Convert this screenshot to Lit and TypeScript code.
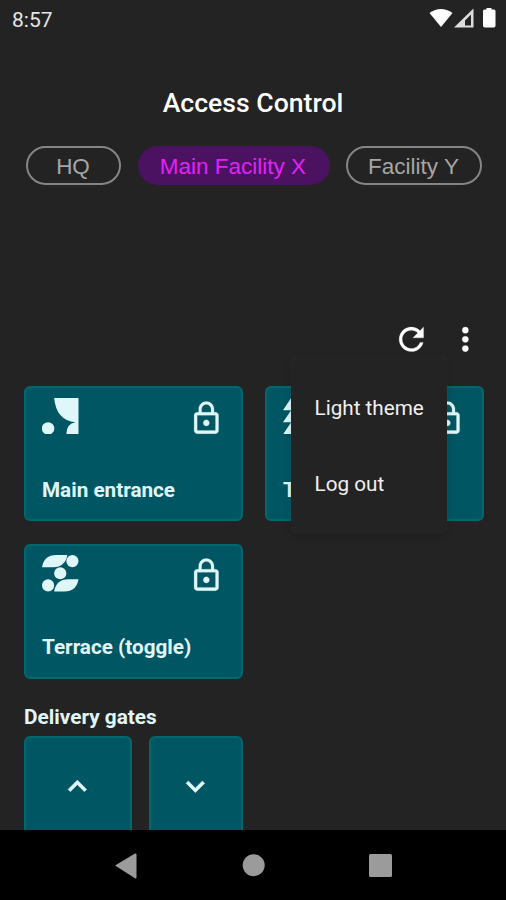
import { LitElement, html, css, svg, nothing } from "lit";
import { customElement, property, state } from "lit/decorators.js";
import { classMap } from "lit/directives/class-map.js";

const glyphs = {
  gate: svg`<path d="M12 0H36V36H24Q24 25.5 33 24Q14 22 12 0Z"/><circle cx="6" cy="30" r="6.2"/>`,
  trees: svg`<path d="M8 0L16 12H0ZM8 12L16 24H0ZM8 24L16 36H0ZM28 0L36 12H20ZM28 12L36 24H20ZM28 24L36 36H20Z"/>`,
  terrace: svg`<path d="M0 12Q2 0 14 0H25Q23 12 11 12ZM12 36Q14 24 26 24H36Q34 36 22 36Z"/><circle cx="30" cy="6" r="6"/><circle cx="18" cy="18" r="6"/><circle cx="6" cy="30" r="6"/>`,
};

const icons = {
  lock: svg`<path d="M18 8h-1V6c0-2.76-2.24-5-5-5S7 3.24 7 6v2H6c-1.1 0-2 .9-2 2v10c0 1.1.9 2 2 2h12c1.1 0 2-.9 2-2V10c0-1.1-.9-2-2-2zM8.9 6c0-1.71 1.39-3.1 3.1-3.1s3.1 1.39 3.1 3.1v2H8.9zM18 20H6V10h12zm-6-3c1.1 0 2-.9 2-2s-.9-2-2-2-2 .9-2 2 .9 2 2 2z"/>`,
  refresh: svg`<path d="M17.65 6.35C16.2 4.9 14.21 4 12 4c-4.42 0-7.99 3.58-7.99 8s3.57 8 7.99 8c3.73 0 6.84-2.55 7.73-6h-2.08c-.82 2.33-3.04 4-5.65 4-3.31 0-6-2.69-6-6s2.69-6 6-6c1.66 0 3.14.69 4.22 1.78L13 11h7V4z"/>`,
  more: svg`<circle cx="12" cy="6" r="2.05"/><circle cx="12" cy="12" r="2.05"/><circle cx="12" cy="18" r="2.05"/>`,
  up: svg`<path d="M12 8l-6 6 1.41 1.41L12 10.83l4.59 4.58L18 14z"/>`,
  down: svg`<path d="M16.59 8.59L12 13.17 7.41 8.59 6 10l6 6 6-6z"/>`,
};

const icon = (name: keyof typeof icons) =>
  html`<svg class="icon" viewBox="0 0 24 24" fill="currentColor">${icons[name]}</svg>`;

const iconStyles = css`
  .icon {
    width: 36.7px;
    height: 36.7px;
    display: block;
    flex: none;
    stroke: currentColor;
    stroke-width: 0.15;
  }
`;

@customElement("door-card")
class DoorCard extends LitElement {
  @property() label = "";
  @property() glyph: keyof typeof glyphs = "gate";

  static styles = [
    iconStyles,
    css`
      :host {
        display: flex;
        flex-direction: column;
        justify-content: space-between;
        box-sizing: border-box;
        height: 135px;
        padding: 9.5px 15.5px 16.5px 16px;
        border: 2px solid #026870;
        border-radius: 6px;
        background: #005662;
        color: #e0f7fa;
      }
      .top { display: flex; justify-content: space-between; align-items: flex-start; }
      .glyph { width: 36.5px; height: 36.5px; display: block; }
      .top .icon { margin: 2px 0 0; }
      .label { font-weight: 700; font-size: 20.7px; line-height: 25px; white-space: nowrap; }
    `,
  ];

  render() {
    return html`
      <div class="top">
        <svg class="glyph" viewBox="0 0 36 36" fill="currentColor">${glyphs[this.glyph]}</svg>
        ${icon("lock")}
      </div>
      <div class="label">${this.label}</div>
    `;
  }
}

@customElement("app-root")
class AppRoot extends LitElement {
  @state() private facility = "Main Facility X";
  @state() private menuOpen = true;

  static styles = [
    iconStyles,
    css`
      :host {
        display: flex;
        flex-direction: column;
        width: 506px;
        height: 900px;
        overflow: hidden;
        background: #232323;
        color: #fff;
        font-family: Roboto, "Liberation Sans", sans-serif;
      }
      .status {
        display: flex;
        justify-content: space-between;
        align-items: center;
        height: 39px;
        padding: 0 9px 0 12px;
        flex: none;
        color: #e6e6e6;
        font-size: 21px;
      }
      .signals { width: 68px; height: 22px; display: block; margin-top: -1px; }
      h1 {
        margin: 48px 0 0;
        text-align: center;
        font-size: 26.6px;
        line-height: 32px;
        font-weight: 500;
      }
      .chips { display: flex; justify-content: space-between; margin: 27px 24px 0 26px; }
      .chip {
        box-sizing: border-box;
        height: 39px;
        border: 2px solid #858585;
        border-radius: 20px;
        background: none;
        padding: 1px 1px 0 0;
        color: #a6a6a6;
        font: 22.5px/35px "Liberation Sans", sans-serif;
        text-align: center;
      }
      .chip:nth-child(1) { width: 95px; }
      .chip:nth-child(2) { width: 192px; }
      .chip:nth-child(3) { width: 136px; }
      .chip.on { border-color: #4a1260; background: #4a1260; color: #e321fb; }
      .content { flex: 1; min-height: 0; overflow: hidden; padding: 0 22.5px 0 24px; }
      .tools {
        position: relative;
        display: flex;
        justify-content: flex-end;
        gap: 17px;
        margin-top: 135.5px;
        padding-right: 0.3px;
      }
      .menu {
        position: absolute;
        top: 36px;
        right: 36.5px;
        box-sizing: border-box;
        width: 156px;
        height: 176px;
        padding: 13.5px 0 0 23.5px;
        border-radius: 6px;
        background: #232323;
        box-shadow: 0 3px 9px rgba(0, 0, 0, 0.15), 0 0 1px rgba(255, 255, 255, 0.16);
        color: #f0f0f0;
        font-size: 20.7px;
        line-height: 76px;
        white-space: nowrap;
      }
      .doors { display: grid; grid-template-columns: 1fr 1fr; gap: 22.5px; margin-top: 29px; }
      .group {
        margin: 26px 0 0;
        font-size: 20.8px;
        line-height: 25px;
        font-weight: 700;
        color: #e0f7fa;
      }
      .gates { display: flex; gap: 17px; margin-top: 6px; }
      .gate {
        box-sizing: border-box;
        display: flex;
        justify-content: center;
        width: 107.5px;
        height: 134px;
        padding-top: 30.5px;
        border: 2px solid #026870;
        border-radius: 6px;
        background: #005662;
        color: #e0f7fa;
      }
      .gate .icon { stroke-width: 0.5; }
      .gate + .gate { width: 94px; }
      .nav {
        flex: none;
        height: 70.5px;
        background: #000;
      }
      .nav svg { display: block; width: 506px; height: 70.5px; }
    `,
  ];

  render() {
    return html`
      <div class="status">
        <span>8:57</span>
        <svg class="signals" viewBox="0 0 68 22">
          <path fill="#fff" d="M0.5 5Q12 -3 23.5 5L12 19Z"/>
          <path fill="#ddd" fill-rule="evenodd" d="M25 19.5L44.500 0.5V19.500ZM36 17.500H42V6.500L36 12.500Z"/>
          <path fill="#fff" d="M57.5 0H62.500V1.500H65Q66.500 1.500 66.500 3V17.700Q66.500 19.500 64.700 19.500H55.800Q54 19.500 54 17.700V3Q54 1.500 55.500 1.500H57.500Z"/>
        </svg>
      </div>
      <h1>Access Control</h1>
      <div class="chips">
        ${["HQ", "Main Facility X", "Facility Y"].map(
          (f) => html`<button
            class=${classMap({ chip: true, on: f === this.facility })}
            @click=${() => (this.facility = f)}
          >${f}</button>`
        )}
      </div>
      <div class="content">
        <div class="tools">
          ${icon("refresh")}
          <span @click=${() => (this.menuOpen = !this.menuOpen)}>${icon("more")}</span>
          ${this.menuOpen
            ? html`<div class="menu"><div>Light theme</div><div>Log out</div></div>`
            : nothing}
        </div>
        <div class="doors">
          <door-card label="Main entrance" glyph="gate"></door-card>
          <door-card label="T" glyph="trees"></door-card>
          <door-card label="Terrace (toggle)" glyph="terrace"></door-card>
        </div>
        <div class="group">Delivery gates</div>
        <div class="gates">
          <div class="gate">${icon("up")}</div>
          <div class="gate">${icon("down")}</div>
        </div>
      </div>
      <div class="nav">
        <svg viewBox="0 0 506 70.5" fill="#9b9b9b">
          <path d="M115 35.5L135 23.5Q136.5 23 136.5 24.5V47.5Q136.5 49 135 48.2Z"/>
          <circle cx="253.7" cy="35.3" r="11"/>
          <rect x="369" y="24" width="23" height="23" rx="1.5"/>
        </svg>
      </div>
    `;
  }
}
